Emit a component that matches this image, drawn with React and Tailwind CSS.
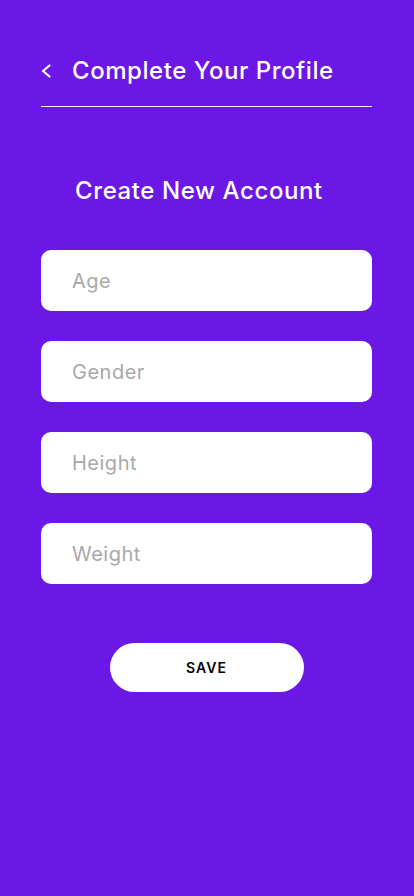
import React from 'react';

const FIELDS = ['Age', 'Gender', 'Height', 'Weight'];

const ChevronLeft = () => (
  <svg width="12" height="16" viewBox="0 0 12 16" fill="none">
    <path d="M9.5 2.5L3 8l6.5 5.5" stroke="white" strokeWidth="2.2" strokeLinecap="round" strokeLinejoin="round" />
  </svg>
);

export default function App() {
  return (
    <div
      className="min-h-[896px] w-full bg-[#6b17e6] pl-[41px] pr-[42px] pt-[56px]"
      style={{ fontFamily: "Inter, 'Open Sans', sans-serif" }}
    >
      {/* Header */}
      <div className="flex items-center h-[30px] gap-[20px] -ml-[1px]">
        <ChevronLeft />
        <h1 className="text-white text-[24px] font-medium tracking-[0.55px]">Complete Your Profile</h1>
      </div>
      <div className="mt-[20px] h-px bg-white" />

      <h2 className="mt-[66px] pl-[34px] text-white text-[24px] font-medium tracking-[0.6px]">
        Create New Account
      </h2>

      <div className="mt-[41px] flex flex-col gap-[30px]">
        {FIELDS.map((f) => (
          <input
            key={f}
            placeholder={f}
            className="h-[61px] w-full rounded-[10px] bg-white px-[31px] text-[20px] tracking-[0.5px] text-gray-800 placeholder:text-[#a9a9a9] outline-none"
          />
        ))}
      </div>

      <div className="mt-[59px] flex justify-center">
        <button className="h-[49px] w-[194px] rounded-full bg-white text-[14px] font-semibold tracking-[1px] text-black">
          SAVE
        </button>
      </div>
    </div>
  );
}
